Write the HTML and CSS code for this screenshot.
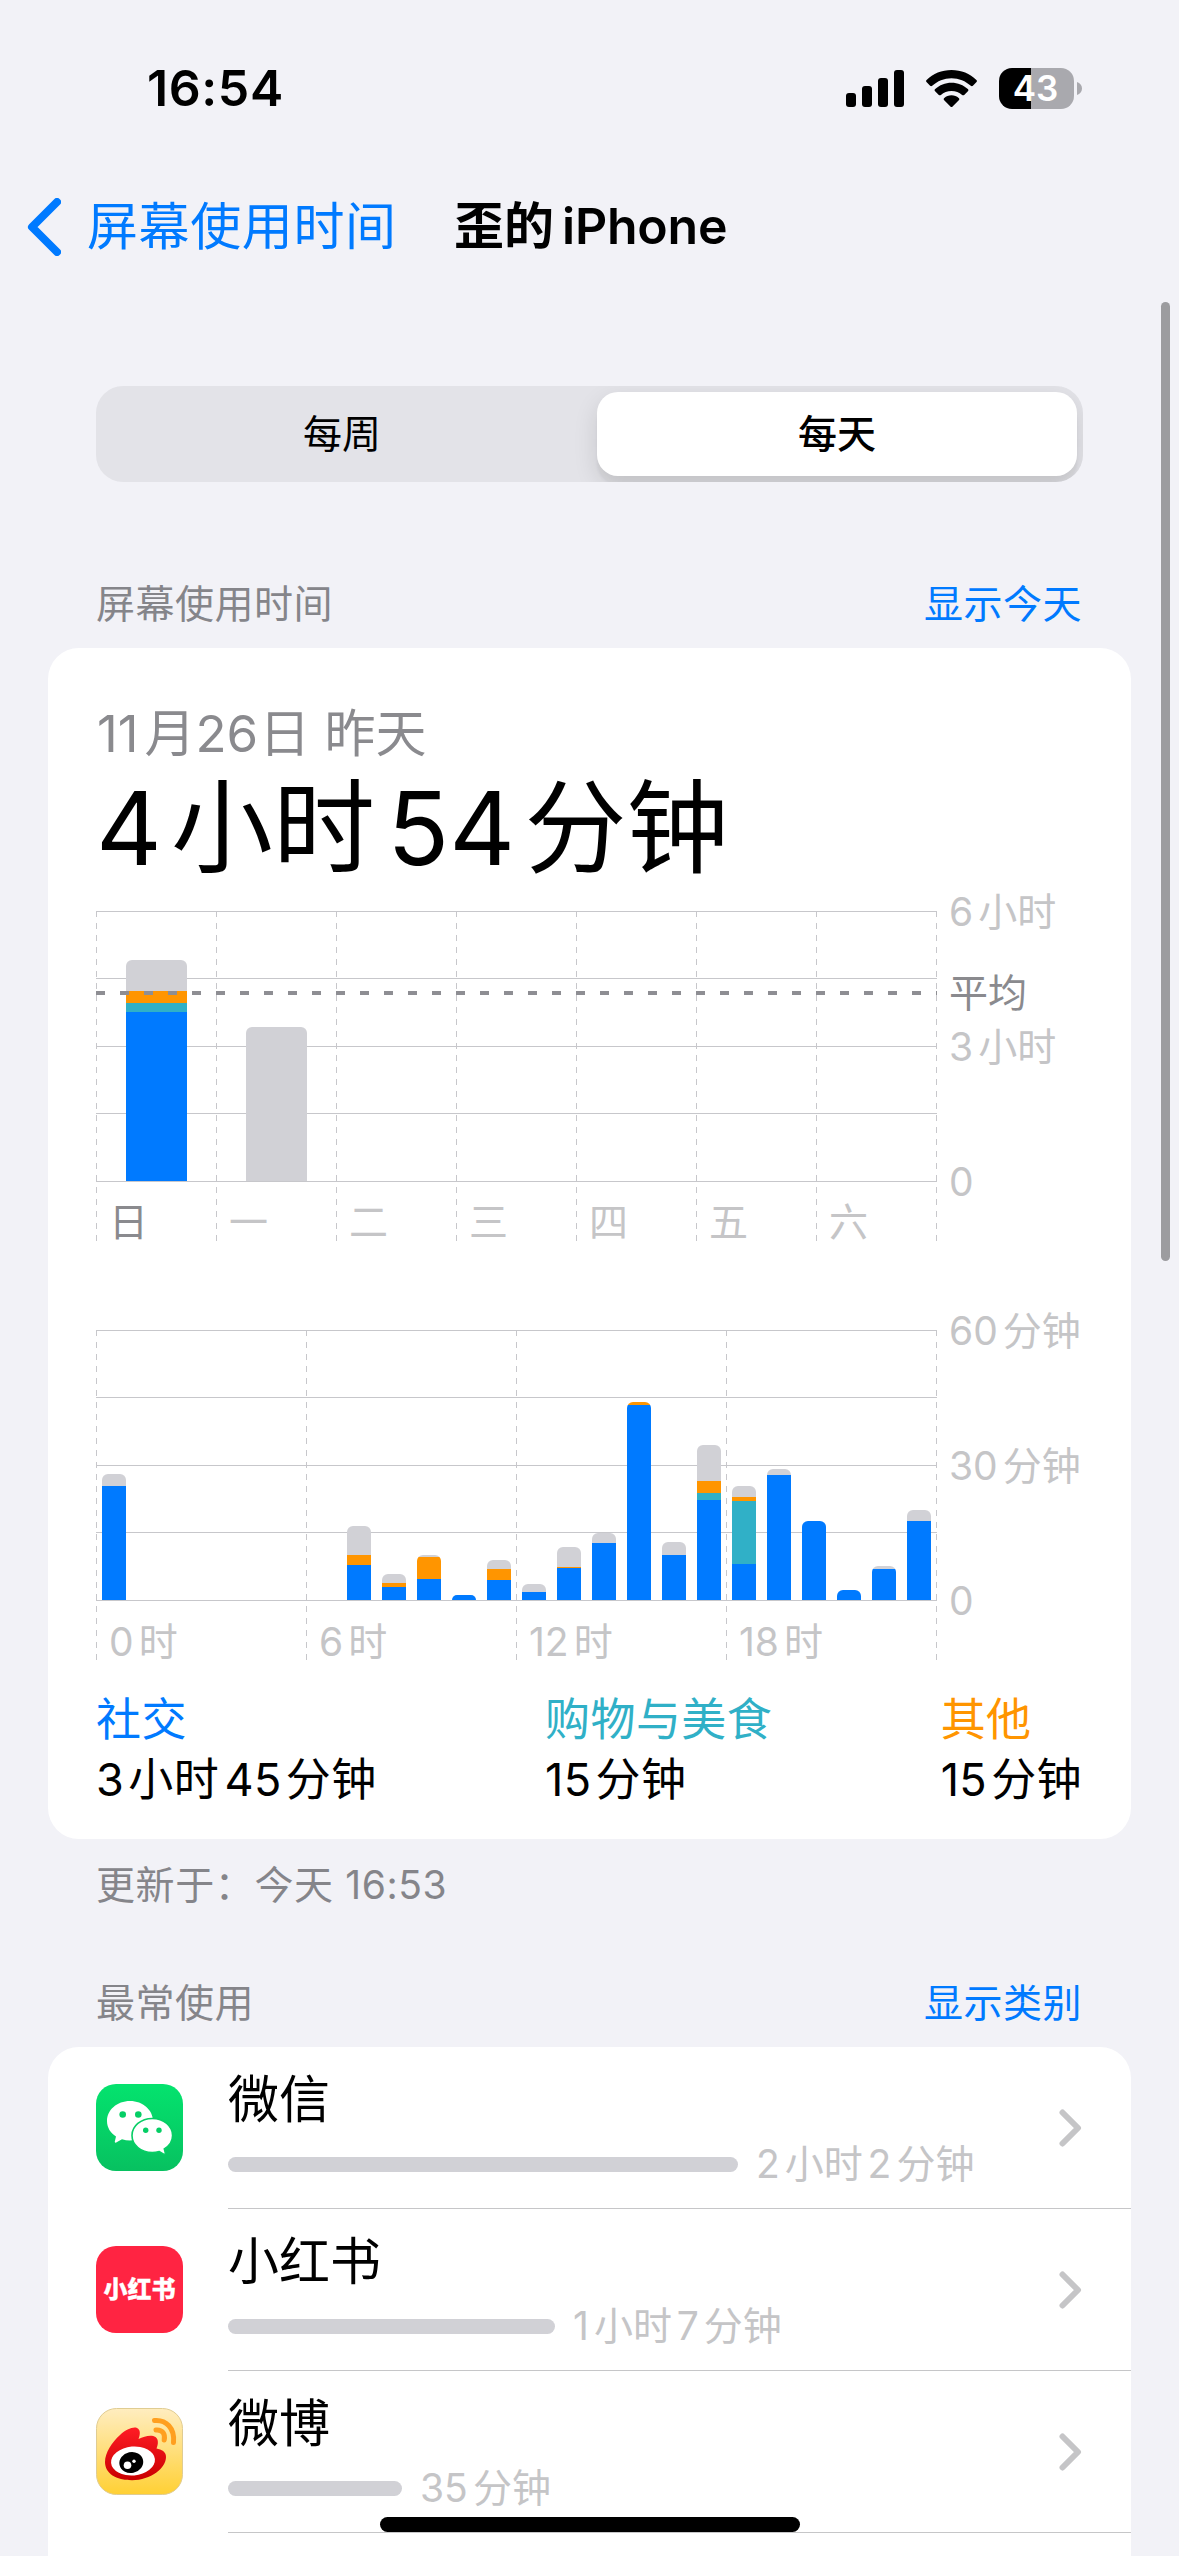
FILE: index.html
```html
<!DOCTYPE html>
<html lang="zh-CN">
<head>
    <meta charset="utf-8">
    <title>屏幕使用时间</title>
    <link rel="stylesheet" href="styles.css">
</head>
<body>

<div class="status-bar">
    <span class="clock">16:54</span>
    <div class="status-icons">
        <svg class="signal" width="58" height="37" viewBox="0 0 58 37">
            <rect x="0" y="23" width="10" height="14" rx="3"/>
            <rect x="16" y="16" width="10" height="21" rx="3"/>
            <rect x="32" y="8" width="10" height="29" rx="3"/>
            <rect x="48" y="0" width="10" height="37" rx="3"/>
        </svg>
        <svg class="wifi" width="51" height="37" viewBox="0 0 51 37">
            <path d="M25.5 0C35.200 0 44 3.700 50.400 9.900c.7.7.7 1.500.1 2.200l-3.600 3.700c-.6.600-1.400.600-2.100 0C39.600 11 32.900 8.200 25.500 8.200S11.400 11 6.200 15.800c-.7.600-1.500.600-2.100 0L.5 12.100c-.6-.7-.6-1.500.1-2.200C7 3.700 15.800 0 25.500 0z"/>
            <path d="M25.500 12.700c6.300 0 12 2.400 16.300 6.300.8.700.8 1.500.1 2.200l-3.700 3.700c-.6.600-1.400.600-2.100.1-2.800-2.500-6.500-4-10.600-4s-7.800 1.500-10.600 4c-.7.500-1.500.500-2.100-.1l-3.700-3.700c-.7-.7-.7-1.500.1-2.200 4.300-3.900 10-6.300 16.300-6.300z"/>
            <path d="M25.500 25.300c2.800 0 5.300 1 7.200 2.700.8.700.8 1.500.1 2.200l-6.200 6.200c-.6.700-1.600.7-2.200 0l-6.200-6.200c-.7-.7-.7-1.500.1-2.200 1.900-1.700 4.400-2.700 7.200-2.700z"/>
        </svg>
        <div class="battery">43</div>
        <svg class="battery-cap" width="5" height="13" viewBox="0 0 5 13"><path d="M0 0c3 1 5 3.500 5 6.500S3 12 0 13z"/></svg>
    </div>
</div>

<div class="nav-bar">
    <svg class="back-icon" width="35" height="58" viewBox="0 0 35 58"><path d="M31 4L6 29l25 25"/></svg>
    <span class="back-label">屏幕使用时间</span>
    <span class="nav-title">歪的<span class="latin">iPhone</span></span>
</div>

<div class="segmented">
    <div class="segment">每周</div>
    <div class="segment selected">每天</div>
</div>

<div class="section-header">
    <span>屏幕使用时间</span>
    <span class="link">显示今天</span>
</div>

<div class="card usage">
    <div class="date"><span class="num">11</span>月<span class="num">26</span>日 昨天</div>
    <div class="total"><span class="num">4</span>小时<span class="num">54</span>分钟</div>

    <div class="chart week">
        <div class="plot">
            <div class="column">
                <div class="bars">
                    <div class="bar">
                        <i class="rest" style="height:31px"></i>
                        <i class="other" style="height:12px"></i>
                        <i class="shop" style="height:9px"></i>
                        <i class="social" style="height:169px"></i>
                    </div>
                </div>
                <span class="tick today">日</span>
            </div>
            <div class="column">
                <div class="bars">
                    <div class="bar"><i class="rest" style="height:154px"></i></div>
                </div>
                <span class="tick">一</span>
            </div>
            <div class="column"><div class="bars"></div><span class="tick">二</span></div>
            <div class="column"><div class="bars"></div><span class="tick">三</span></div>
            <div class="column"><div class="bars"></div><span class="tick">四</span></div>
            <div class="column"><div class="bars"></div><span class="tick">五</span></div>
            <div class="column"><div class="bars"></div><span class="tick">六</span></div>
            <div class="average-line"></div>
        </div>
        <div class="scale">
            <span><span class="num">6</span>小时</span>
            <span><span class="num">3</span>小时</span>
            <span>0</span>
            <span class="average-label">平均</span>
        </div>
    </div>

    <div class="chart day">
        <div class="plot" id="hours"></div>
        <div class="scale">
            <span><span class="num">60</span>分钟</span>
            <span><span class="num">30</span>分钟</span>
            <span>0</span>
        </div>
    </div>

    <div class="legend">
        <div>
            <div class="social-text">社交</div>
            <div><span class="num">3</span>小时<span class="num">45</span>分钟</div>
        </div>
        <div>
            <div class="shop-text">购物与美食</div>
            <div><span class="num">15</span>分钟</div>
        </div>
        <div>
            <div class="other-text">其他</div>
            <div><span class="num">15</span>分钟</div>
        </div>
    </div>
</div>

<div class="updated">更新于：今天 16:53</div>

<div class="section-header most-used">
    <span>最常使用</span>
    <span class="link">显示类别</span>
</div>

<div class="card apps">
    <div class="app">
        <svg class="app-icon" viewBox="0 0 87 87">
            <defs>
                <linearGradient id="green" x1="0" y1="0" x2="0" y2="1">
                    <stop offset="0" stop-color="#04e36e"/>
                    <stop offset="1" stop-color="#07c160"/>
                </linearGradient>
            </defs>
            <rect width="87" height="87" rx="20" fill="url(#green)"/>
            <path fill="#fff" d="M34 17C21 17 11 26 11 37c0 6.500 3.500 12 9 15.500L18.800 57.500c-.2 1 .6 1.500 1.400 1L26 55.200c2.600.8 5.300 1.200 8 1.200 13 0 23-8.700 23-19.400S47 17 34 17z"/>
            <path fill="#fff" stroke="#07ce65" stroke-width="1.600" d="M56.300 34.500c-11.500 0-20.300 7.600-20.300 17s8.800 17 20.300 17c2.500 0 4.800-.4 7-1l4.300 2.600c1.200.7 2 0 1.700-1.200l-1-4C73.500 61.800 76.600 57 76.600 51.500c0-9.400-8.800-17-20.300-17z"/>
            <g fill="#05ce65">
                <circle cx="26.700" cy="30.500" r="3.300"/>
                <circle cx="42.300" cy="30.500" r="3.300"/>
                <circle cx="49.700" cy="46.300" r="2.700"/>
                <circle cx="63" cy="46.300" r="2.700"/>
            </g>
        </svg>
        <div class="app-body">
            <div class="app-info">
                <div class="app-name">微信</div>
                <div class="app-time">
                    <div class="meter" style="width:510px"></div>
                    <span><span class="num">2</span>小时<span class="num">2</span>分钟</span>
                </div>
            </div>
            <svg class="chevron" width="23" height="38" viewBox="0 0 23 38"><path d="M3.500 3.500L19 19 3.500 34.500"/></svg>
        </div>
    </div>
    <div class="app">
        <div class="app-icon red-icon">小红书</div>
        <div class="app-body">
            <div class="app-info">
                <div class="app-name">小红书</div>
                <div class="app-time">
                    <div class="meter" style="width:327px"></div>
                    <span><span class="num">1</span>小时<span class="num">7</span>分钟</span>
                </div>
            </div>
            <svg class="chevron" width="23" height="38" viewBox="0 0 23 38"><path d="M3.500 3.500L19 19 3.500 34.500"/></svg>
        </div>
    </div>
    <div class="app">
        <svg class="app-icon" viewBox="0 0 87 87">
            <defs>
                <linearGradient id="yellow" x1="0" y1="0" x2="0" y2="1">
                    <stop offset="0" stop-color="#ffedc0"/>
                    <stop offset="1" stop-color="#ffd034"/>
                </linearGradient>
                <linearGradient id="red" x1="0" y1="0" x2="0" y2="1">
                    <stop offset="0" stop-color="#ff1c25"/>
                    <stop offset="1" stop-color="#c90000"/>
                </linearGradient>
            </defs>
            <rect x=".5" y=".5" width="86" height="86" rx="20" fill="url(#yellow)" stroke="#e0cc92"/>
            <path fill="url(#red)" d="M9 54c0-9 7-20 15-27 6-5.500 13-8.500 17-7 3.500 1.500 3.500 6 1.500 11 6-3 13-4.500 17-2 3 2 3 7 1 11.500 5 1 9.500 3 9.500 8.500C70 60 55 72.200 36 72.200 20 72.200 9 65.500 9 54z"/>
            <ellipse cx="37" cy="53" rx="22" ry="14.500" fill="#fff" transform="rotate(-5 37 53)"/>
            <ellipse cx="35.300" cy="54.500" rx="12" ry="10.400" transform="rotate(-12 35.300 54.500)"/>
            <circle cx="31.500" cy="57.300" r="3.800" fill="#fff"/>
            <circle cx="38" cy="53.300" r="1.700" fill="#fff"/>
            <g fill="none" stroke="#ff9f1f" stroke-width="5" stroke-linecap="round">
                <path d="M58.500 12.500C70 11.500 79 20 77.500 34.500"/>
                <path d="M60 22c6.500-.5 9.500 4 8.200 10"/>
            </g>
        </svg>
        <div class="app-body">
            <div class="app-info">
                <div class="app-name">微博</div>
                <div class="app-time">
                    <div class="meter" style="width:174px"></div>
                    <span><span class="num">35</span>分钟</span>
                </div>
            </div>
            <svg class="chevron" width="23" height="38" viewBox="0 0 23 38"><path d="M3.500 3.500L19 19 3.500 34.500"/></svg>
        </div>
    </div>
</div>

<div class="scrollbar"></div>
<div class="home-indicator"></div>

<script>
    const kinds = ['rest', 'other', 'shop', 'social'];
    // Segment heights per hour, from top to bottom, in the order of kinds
    const usage = {
        0: [12, 0, 0, 114],
        7: [29, 10, 0, 35],
        8: [9, 4, 0, 13],
        9: [2, 22, 0, 21],
        10: [0, 0, 0, 5],
        11: [9, 11, 0, 20],
        12: [8, 0, 0, 8],
        13: [20, 1, 0, 32],
        14: [10, 0, 0, 57],
        15: [0, 3, 0, 195],
        16: [13, 0, 0, 45],
        17: [36, 12, 7, 100],
        18: [11, 4, 63, 36],
        19: [6, 0, 0, 125],
        20: [0, 0, 0, 79],
        21: [0, 0, 0, 10],
        22: [3, 0, 0, 31],
        23: [11, 0, 0, 79]
    };

    let html = '';
    for (let start = 0; start < 24; start += 6) {
        html += '<div class="column"><div class="bars">';
        for (let hour = start; hour < start + 6; hour++) {
            html += '<div class="bar">';
            (usage[hour] || []).forEach((height, i) => {
                if (height) html += `<i class="${kinds[i]}" style="height:${height}px"></i>`;
            });
            html += '</div>';
        }
        html += `</div><span class="tick"><span class="num">${start}</span>时</span></div>`;
    }
    document.getElementById('hours').innerHTML = html;
</script>

</body>
</html>
```
FILE: styles.css
```css
* {
    box-sizing: border-box;
}

body {
    margin: 0;
    height: 2556px;
    overflow: hidden;
    position: relative;
    background: #f2f2f7;
    color: #000;
    font-family: Inter, "Noto Sans CJK SC", sans-serif;
    font-size: 39px;
    text-autospace: no-autospace;
}

.num {
    margin-right: 0.13em;
}

.num + .num {
    margin-left: 0.12em;
}

.status-bar {
    display: flex;
    justify-content: space-between;
    height: 176px;
    padding: 0 97px 0 147px;
    align-items: center;
}

.clock {
    font-size: 50px;
    font-weight: 600;
    letter-spacing: 0.6px;
}

.status-icons {
    display: flex;
    align-items: center;
}

.wifi {
    margin: 0 22px;
}

.battery {
    width: 75px;
    height: 41px;
    padding-right: 2px;
    border-radius: 13px;
    background: linear-gradient(to right, #000 32px, #a9a9ae 32px);
    color: #fff;
    font-size: 35px;
    font-weight: 600;
    line-height: 41px;
    text-align: center;
}

.battery-cap {
    margin-left: 3px;
    fill: #a9a9ae;
}

.nav-bar {
    display: flex;
    align-items: center;
    height: 102px;
    padding-left: 26px;
    font-size: 51px;
    line-height: 74px;
}

.back-icon path {
    fill: none;
    stroke: #007aff;
    stroke-width: 8;
    stroke-linecap: round;
    stroke-linejoin: round;
}

.back-label {
    width: 367px;
    margin-left: 26px;
    color: #007aff;
    letter-spacing: 0.6px;
}

.nav-title {
    padding-bottom: 2px;
    font-weight: 600;
    font-size: 50px;
}

.nav-title .latin {
    margin-left: 8px;
    letter-spacing: -0.2px;
}

.segmented {
    display: flex;
    justify-content: space-between;
    height: 96px;
    margin: 108px 96px 0;
    padding: 6px;
    border-radius: 27px;
    background: #e3e3e8;
    overflow: hidden;
}

.segment {
    width: 480px;
    line-height: 84px;
    text-align: center;
}

.segment.selected {
    flex: none;
    border-radius: 21px;
    background: #fff;
    box-shadow: 0 9px 24px rgba(0, 0, 0, 0.12), 0 9px 3px rgba(0, 0, 0, 0.04);
    font-weight: 500;
}

.section-header {
    display: flex;
    justify-content: space-between;
    margin: 92px 97px 0 96px;
    height: 74px;
    line-height: 60px;
    letter-spacing: 0.5px;
    color: #85858a;
}

.link {
    color: #007aff;
}

.card {
    margin: 0 48px;
    border-radius: 31px;
    background: #fff;
}

.usage {
    height: 1191px;
    padding: 48px 48px 0;
}

.date {
    height: 76px;
    line-height: 75px;
    color: #8a8a8e;
    font-size: 51px;
    padding-left: 1px;
}

.date .num {
    margin-right: 6px;
}

.date .num + .num {
    margin-left: 0;
    margin-right: 1px;
}

.total {
    height: 139px;
    line-height: 112px;
    font-size: 102px;
}

.total .num {
    margin-right: 0.09em;
}

.total .num + .num {
    margin-left: 0.12em;
}

.chart {
    display: flex;
}

.plot {
    display: flex;
    position: relative;
    width: 841px;
    height: 330px;
    background:
        repeating-linear-gradient(to bottom, #c7c7cb 0 6px, transparent 6px 12px) right top / 1px 100% no-repeat,
        repeating-linear-gradient(to bottom, #c7c7cb 0 1px, transparent 1px 67px, #c7c7cb 67px 68px, transparent 68px 135px) left top / 100% 271px no-repeat;
}

.column {
    width: 120px;
    background: repeating-linear-gradient(to bottom, #c7c7cb 0 6px, transparent 6px 12px) left top / 1px 100% no-repeat;
}

.day .column {
    width: 210px;
}

.bars {
    display: flex;
    height: 270px;
    align-items: flex-end;
}

.week .bars {
    padding-left: 30px;
}

.day .bars {
    padding-left: 6px;
    gap: 11px;
}

.bar {
    overflow: hidden;
    border-radius: 6px 6px 0 0;
}

.week .bar {
    width: 61px;
}

.day .bar {
    width: 24px;
}

.bar i {
    display: block;
}

.rest {
    background: #d1d1d6;
}

.other {
    background: #ff9500;
}

.shop {
    background: #30b0c7;
}

.social {
    background: #007aff;
}

.tick {
    display: block;
    padding: 11px 0 0 13px;
    line-height: 60px;
    color: #c5c5c7;
}

.day .tick {
    padding-top: 12px;
}

.tick.today,
.average-label {
    color: #8a8a8e;
}

.average-line {
    position: absolute;
    left: 0;
    top: 80px;
    width: 100%;
    height: 4px;
    background: repeating-linear-gradient(to right, #8e8e93 0 9px, transparent 9px 24px);
}

.scale {
    display: flex;
    position: relative;
    flex-direction: column;
    justify-content: space-between;
    height: 271px;
    padding-left: 12px;
    color: #c5c5c7;
    white-space: nowrap;
}

.scale > span {
    line-height: 1px;
}

.average-label {
    position: absolute;
    top: 81px;
}

.chart.day {
    margin-top: 89px;
}

.legend {
    display: flex;
    justify-content: space-between;
    margin: 30px 1px 0 0;
    font-size: 45px;
    line-height: 60px;
    letter-spacing: 0.4px;
}

.legend .num {
    margin-right: 0.09em;
}

.social-text {
    color: #007aff;
}

.shop-text {
    color: #30b0c7;
}

.other-text {
    color: #ff9500;
}

.updated {
    margin: 16px 96px 0;
    line-height: 60px;
    letter-spacing: 0.6px;
    color: #85858a;
}

.most-used {
    margin-top: 58px;
}

.apps {
    height: 560px;
}

.app {
    display: flex;
    height: 162px;
    padding-left: 48px;
}

.app-icon {
    width: 87px;
    height: 87px;
    margin: 37px 45px 0 0;
}

.red-icon {
    border-radius: 20px;
    background: #ff2442;
    color: #fff;
    font-size: 24px;
    font-weight: 900;
    line-height: 87px;
    text-align: center;
    -webkit-text-stroke: 0.3px #fff;
}

.app-body {
    display: flex;
    flex: 1;
    align-items: center;
    justify-content: space-between;
    padding-right: 49px;
    border-bottom: 1px solid #c6c6c8;
}

.app-info {
    height: 100%;
    padding-top: 18px;
}

.app-name {
    height: 69px;
    line-height: 70px;
    font-size: 51px;
}

.app-time {
    display: flex;
    align-items: center;
    gap: 18px;
    line-height: 60px;
    color: #c5c5c7;
}

.meter {
    height: 15px;
    border-radius: 8px;
    background: #d1d1d6;
}

.chevron path {
    fill: none;
    stroke: #c5c5c7;
    stroke-width: 6;
    stroke-linecap: round;
    stroke-linejoin: round;
}

.scrollbar {
    position: absolute;
    top: 302px;
    left: 1161px;
    width: 9px;
    height: 959px;
    border-radius: 5px;
    background: #9c9c9f;
}

.home-indicator {
    position: absolute;
    top: 2517px;
    left: 380px;
    width: 420px;
    height: 15px;
    border-radius: 8px;
    background: #000;
}
```
